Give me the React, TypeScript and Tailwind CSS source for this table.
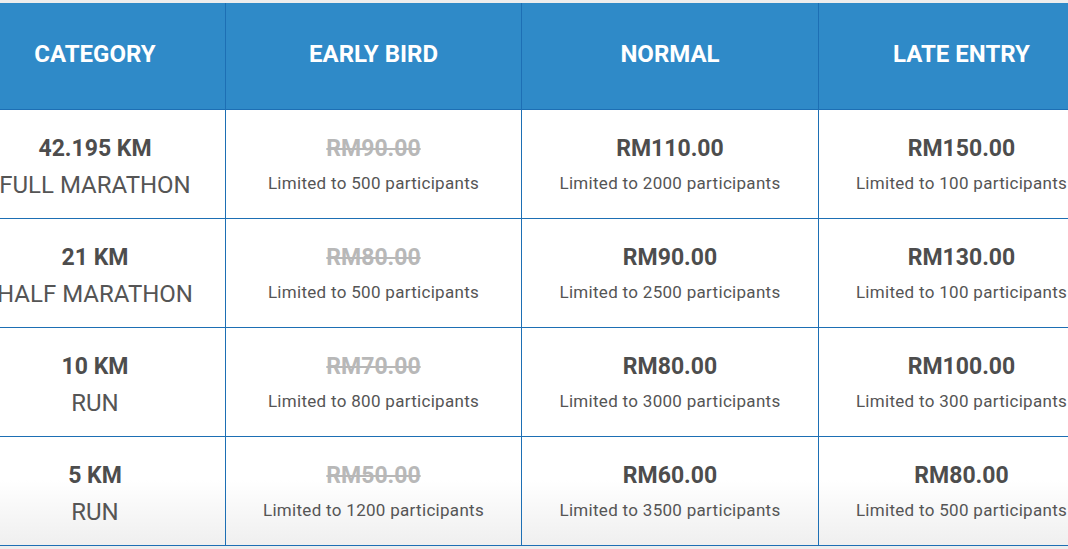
import React from "react";

const rows = [
    { km: "42.195 KM", name: "FULL MARATHON", early: ["RM90.00", "500"], normal: ["RM110.00", "2000"], late: ["RM150.00", "100"] },
    { km: "21 KM", name: "HALF MARATHON", early: ["RM80.00", "500"], normal: ["RM90.00", "2500"], late: ["RM130.00", "100"] },
    { km: "10 KM", name: "RUN", early: ["RM70.00", "800"], normal: ["RM80.00", "3000"], late: ["RM100.00", "300"] },
    { km: "5 KM", name: "RUN", early: ["RM50.00", "1200"], normal: ["RM60.00", "3500"], late: ["RM80.00", "500"] },
];

const cols = "grid grid-cols-[261px_296px_297px_285px] ml-[-35px]";

const PriceCell = ({ price, limit, old, last }: { price: string; limit: string; old?: boolean; last?: boolean }) => (
    <div className={`flex flex-col items-center justify-center pt-[3px] ${last ? "" : "border-r border-[#1d6fb4]"}`}>
        <span
            className={`text-[23px] font-bold leading-[34px] ${old ? "text-[#b8b8b8] line-through decoration-[2px]" : "text-[#4d4d4d]"}`}
        >
            {price}
        </span>
        <span className="text-[17px] leading-[34px] tracking-[0.3px] text-[#555]">Limited to {limit} participants</span>
    </div>
);

export default function App() {
    return (
        <div
            className="w-[1068px] h-[549px] overflow-hidden bg-[#ededed] pt-[3px]"
            style={{ fontFamily: "Roboto, 'Liberation Sans', sans-serif" }}
        >
            <div className="bg-white">
                {/* header */}
                <div className={`${cols} h-[107px] bg-[#2f8ac8] border-b border-[#1d6fb4] text-white text-[24px] font-bold`}>
                    {["CATEGORY", "EARLY BIRD", "NORMAL", "LATE ENTRY"].map((h, i) => (
                        <div
                            key={h}
                            className={`flex items-center justify-center pb-[4px] ${i < 3 ? "border-r border-[#1d6fb4]" : ""}`}
                        >
                            {h}
                        </div>
                    ))}
                </div>
                {rows.map((r, i) => (
                    <div
                        key={i}
                        className={`${cols} h-[109px] border-b border-[#1d6fb4] ${
                            i === rows.length - 1 ? "bg-gradient-to-b from-white from-40% to-[#efefef]" : ""
                        }`}
                    >
                        <div className="flex flex-col items-center justify-center pt-[5px] border-r border-[#1d6fb4]">
                            <span className="text-[23px] font-bold leading-[36px] text-[#4d4d4d]">{r.km}</span>
                            <span className="text-[24px] leading-[36px] text-[#555] whitespace-nowrap">{r.name}</span>
                        </div>
                        <PriceCell price={r.early[0]} limit={r.early[1]} old />
                        <PriceCell price={r.normal[0]} limit={r.normal[1]} />
                        <PriceCell price={r.late[0]} limit={r.late[1]} last />
                    </div>
                ))}
            </div>
        </div>
    );
}
